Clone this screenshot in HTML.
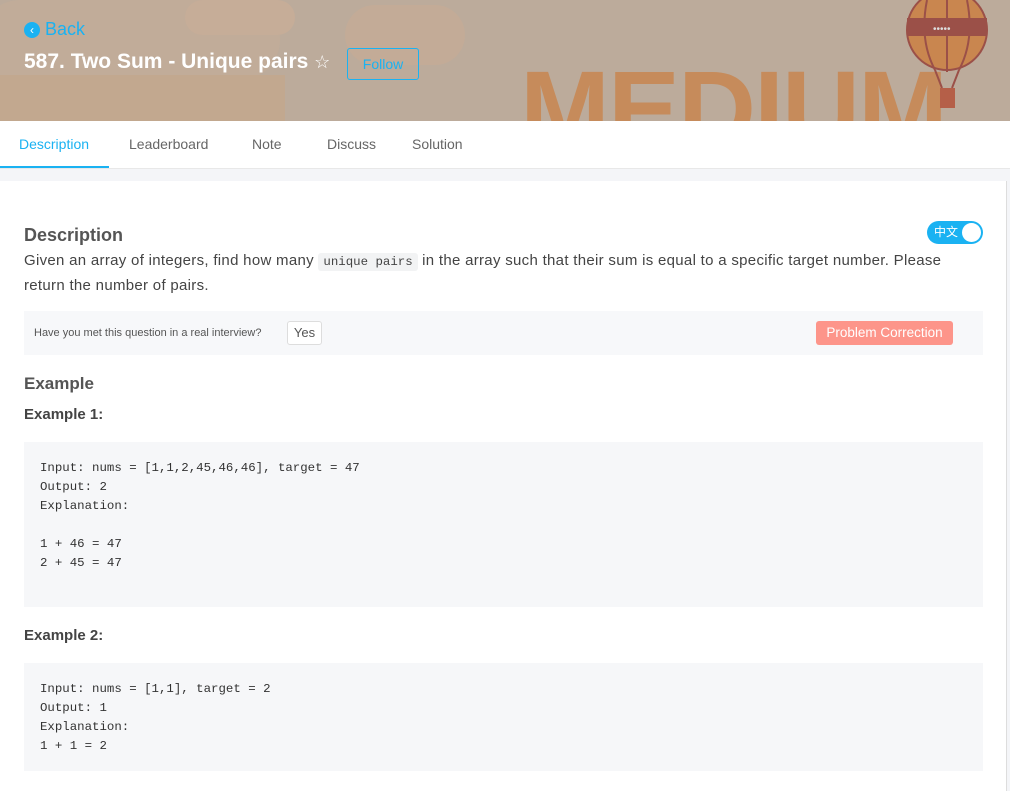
<!DOCTYPE html>
<html><head><meta charset="utf-8"><style>
*{margin:0;padding:0;box-sizing:border-box}
body{width:1010px;height:791px;overflow:hidden;background:#f4f5f8;font-family:"Liberation Sans",sans-serif;color:#333;position:relative}
.hero{position:absolute;left:0;top:0;width:1010px;height:121px;background:#bcab9b;overflow:hidden}
.tabs{position:absolute;top:121px;left:0;width:1010px;height:48px;background:#fff;border-bottom:1px solid #e8e8e8}
.tab{position:absolute;top:15px;font-size:14px;color:#666}
.main{position:absolute;top:181px;left:0;width:1007px;height:610px;background:#fff;border-right:1px solid #ddd}
.abs{position:absolute}
pre{font-family:"Liberation Mono",monospace;font-size:12.4px;line-height:19px;color:#333}
.code{position:absolute;left:24px;width:959px;background:#f6f7f9}
</style></head><body>
<div class="hero">
<div class="abs" style="left:-20px;top:0;width:300px;height:80px;border-radius:60px;background:#c4ad98;opacity:.6"></div>
<div class="abs" style="left:0;top:75px;width:285px;height:46px;background:#c2a88f"></div>
<div class="abs" style="left:185px;top:0;width:110px;height:35px;border-radius:30px;background:#c6ad98"></div>
<div class="abs" style="left:345px;top:5px;width:120px;height:60px;border-radius:50px;background:#c3ab97"></div>
<div class="abs" style="left:520px;top:55px;font-size:108px;font-weight:bold;color:#c68b5b;letter-spacing:-2px;line-height:1">MEDIUM</div>
<svg class="abs" style="left:905px;top:0" width="85" height="110" viewBox="0 0 85 110">
<ellipse cx="42" cy="30" rx="40" ry="40" fill="#c9864f" stroke="#9b5048" stroke-width="2"/>
<path d="M22 0 Q14 40 30 70 M42 0 V72 M62 0 Q70 40 54 70" stroke="#9b5048" stroke-width="2" fill="none"/>
<rect x="2" y="18" width="80" height="18" fill="#9b5048"/>
<text x="28" y="32" fill="#ddd" font-size="10">•••••</text>
<path d="M30 70 L37 88 M54 70 L47 88" stroke="#9b5048" stroke-width="2"/>
<rect x="35" y="88" width="15" height="20" fill="#b55f48"/>
</svg>
<div class="abs" style="left:24px;top:19px;font-size:18px;color:#1ab2f2"><span style="display:inline-block;width:16px;height:16px;border-radius:50%;background:#1ab2f2;color:#fff;font-size:12px;text-align:center;line-height:16px;vertical-align:1px">‹</span> Back</div>
<div class="abs" style="left:24px;top:50px;font-size:21px;font-weight:bold;color:#fff">587. Two Sum - Unique pairs <span style="font-weight:normal;font-size:18px">☆</span></div>
<div class="abs" style="left:347px;top:48px;width:72px;height:32px;border:1px solid #1ab2f2;border-radius:3px;color:#1ab2f2;font-size:14px;text-align:center;line-height:30px">Follow</div>
</div>
<div class="tabs">
<div class="tab" style="left:19px;color:#1ab2f2">Description</div>
<div class="tab" style="left:129px">Leaderboard</div>
<div class="tab" style="left:252px">Note</div>
<div class="tab" style="left:327px">Discuss</div>
<div class="tab" style="left:412px">Solution</div>
<div class="abs" style="left:0;top:45px;width:109px;height:2px;background:#1ab2f2"></div>
</div>
<div class="main">
<div class="abs" style="left:24px;top:44px;font-size:18px;font-weight:bold;color:#555">Description</div>
<div class="abs" style="left:927px;top:40px;width:56px;height:23px;border-radius:12px;background:#1ab2f2"><span class="abs" style="left:7px;top:3px;font-size:12px;color:#fff;font-family:'Noto Sans CJK SC',sans-serif;line-height:16px">中文</span><span class="abs" style="right:2px;top:2px;width:19px;height:19px;border-radius:50%;background:#fff"></span></div>
<div class="abs" style="left:24px;top:68px;width:945px;font-size:15px;letter-spacing:0.3px;line-height:24px;color:#444">Given an array of integers, find how many <code style="font-family:'Liberation Mono',monospace;font-size:12.4px;letter-spacing:0;background:#f2f3f4;padding:2px 5px;border-radius:3px">unique pairs</code> in the array such that their sum is equal to a specific target number. Please return the number of pairs.</div>
<div class="abs" style="left:24px;top:130px;width:959px;height:44px;background:#f7f8fa">
<span class="abs" style="left:10px;top:16px;font-size:11px;color:#555">Have you met this question in a real interview?</span>
<span class="abs" style="left:263px;top:10px;width:35px;height:24px;border:1px solid #ddd;background:#fff;border-radius:3px;font-size:13px;text-align:center;line-height:22px;color:#555">Yes</span>
<span class="abs" style="left:792px;top:10px;width:137px;height:24px;background:#fd958a;border-radius:3px;font-size:13.5px;color:#fff;text-align:center;line-height:24px">Problem Correction</span>
</div>
<div class="abs" style="left:24px;top:193px;font-size:17px;font-weight:bold;color:#555">Example</div>
<div class="abs" style="left:24px;top:225px;font-size:15px;font-weight:bold;color:#444">Example 1:</div>
<div class="code" style="top:261px;height:165px"><pre style="padding:17px 16px">Input: nums = [1,1,2,45,46,46], target = 47
Output: 2
Explanation:

1 + 46 = 47
2 + 45 = 47</pre></div>
<div class="abs" style="left:24px;top:446px;font-size:15px;font-weight:bold;color:#444">Example 2:</div>
<div class="code" style="top:482px;height:108px"><pre style="padding:17px 16px">Input: nums = [1,1], target = 2
Output: 1
Explanation:
1 + 1 = 2</pre></div>
</div>
</body></html>
